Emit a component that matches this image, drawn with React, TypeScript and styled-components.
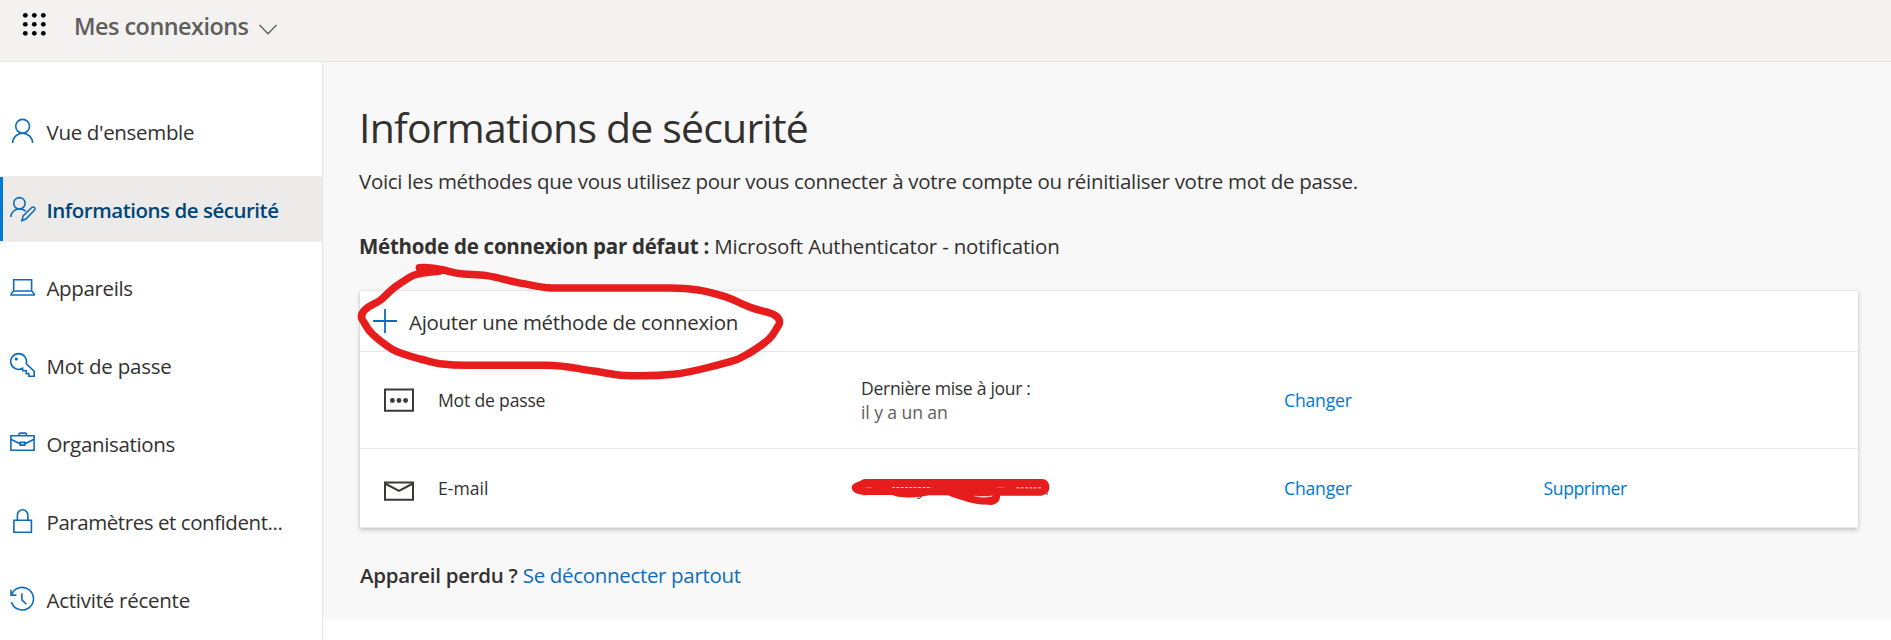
import React from 'react';
import styled, { createGlobalStyle } from 'styled-components';

const GlobalStyle = createGlobalStyle`
  * { box-sizing: border-box; }
  body {
    margin: 0;
    background: #fff;
    color: #323130;
    font-family: 'Open Sans', 'Noto Sans', sans-serif;
    font-size: 20.5px;
    overflow: hidden;
  }
`;

const Page = styled.div`
  display: flex;
  flex-direction: column;
  height: 640px;
  overflow: hidden;
`;

const Header = styled.header`
  display: flex;
  align-items: flex-start;
  flex: none;
  height: 62px;
  padding-left: 22px;
  background: #f3f2f0;
  border-bottom: 1px solid #e6e6e6;
`;

const WaffleIcon = styled.svg`
  width: 25px;
  height: 25px;
  margin-top: 12px;
  fill: #000;
`;

const HeaderTitle = styled.span`
  margin-left: 27px;
  font-size: 23.4px;
  font-weight: 600;
  line-height: 52px;
  letter-spacing: -0.5px;
  white-space: nowrap;
  color: #605e5c;
`;

const ChevronIcon = styled.svg`
  width: 20px;
  height: 12px;
  margin: 23px 0 0 9px;
  fill: none;
  stroke: #605e5c;
  stroke-width: 1.3;
`;

const Body = styled.div`
  display: flex;
  flex: 1;
  min-height: 0;
`;

const Sidebar = styled.nav`
  display: flex;
  flex-direction: column;
  gap: 12px;
  flex: none;
  width: 323px;
  padding-top: 36px;
  border-right: 1px solid #e5e5e5;
`;

const NavItem = styled.a<{ $active?: boolean }>`
  display: flex;
  align-items: center;
  gap: 10.5px;
  flex: none;
  position: relative;
  height: 66px;
  padding-left: 10px;
  border-radius: 2px;
  background: ${p => (p.$active ? '#ecebe9' : 'transparent')};
  color: ${p => (p.$active ? '#004578' : '#323130')};
  font-weight: ${p => (p.$active ? 600 : 400)};

  &::before {
    content: '';
    display: ${p => (p.$active ? 'block' : 'none')};
    position: absolute;
    left: 0;
    top: 1px;
    bottom: 1px;
    width: 3px;
    background: #0078d4;
  }
`;

const NavIcon = styled.svg`
  flex: none;
  width: 26px;
  height: 26px;
  fill: none;
  stroke: #0f6cbd;
  stroke-width: 1.6;
`;

const NavLabel = styled.span<{ $tracking: number }>`
  padding-top: 2px;
  line-height: 28px;
  letter-spacing: ${p => p.$tracking}px;
  white-space: nowrap;
`;

const Main = styled.main`
  flex: 1;
  height: 558px;
  padding: 37px 33px 0 36px;
  background: #f8f8f8;
`;

const Title = styled.h1`
  margin: 0;
  font-size: 41px;
  font-weight: 400;
  line-height: 56px;
  letter-spacing: -0.81px;
`;

const Intro = styled.p`
  margin: 12px 0 0;
  line-height: 28px;
  letter-spacing: -0.295px;
`;

const DefaultMethod = styled.p`
  margin: 37px 0 0;
  line-height: 28px;
  letter-spacing: -0.18px;
`;

const Bold = styled.strong<{ $weight: number; $tracking: number }>`
  font-weight: ${p => p.$weight};
  letter-spacing: ${p => p.$tracking}px;
`;

const Card = styled.section`
  position: relative;
  margin: 31px 0 0 1px;
  background: #fff;
  box-shadow: 0 2px 5px rgba(0, 0, 0, 0.2), 0 0 2px rgba(0, 0, 0, 0.1);
`;

const AddRow = styled.div`
  display: flex;
  align-items: center;
  gap: 11px;
  height: 61px;
  padding-left: 12px;
  border-bottom: 1px solid #e6e6e6;
`;

const AddLabel = styled.span`
  padding-top: 2px;
  line-height: 28px;
  letter-spacing: -0.3px;
`;

const MethodRow = styled.div<{ $height: number }>`
  display: grid;
  grid-template-columns: 78px 423px 423px 259.5px 1fr;
  align-items: center;
  height: ${p => p.$height}px;
  border-bottom: 1px solid #e6e6e6;
  font-size: 17.6px;
  line-height: 24px;
`;

const MethodIcon = styled.svg`
  width: 32px;
  height: 32px;
  margin-left: 23px;
  fill: none;
  stroke: #3b3a39;
  stroke-width: 2;
`;

const Cell = styled.span<{ $tracking?: number }>`
  letter-spacing: ${p => p.$tracking ?? 0}px;
  white-space: nowrap;
`;

const Muted = styled.div`
  color: #605e5c;
  letter-spacing: -0.1px;
`;

const RowLink = styled.a<{ $tracking: number }>`
  color: #0078d4;
  letter-spacing: ${p => p.$tracking}px;
`;

const LostDevice = styled.p`
  margin: 33px 0 0 1px;
  line-height: 28px;
`;

const SignOutLink = styled.a`
  color: #0f6cbd;
  letter-spacing: -0.33px;
`;

const CircleMark = styled.svg`
  position: absolute;
  left: -20px;
  top: -41px;
  width: 460px;
  height: 150px;
  pointer-events: none;
`;

const ScribbleMark = styled.svg`
  position: absolute;
  left: 488px;
  top: 183px;
  width: 210px;
  height: 36px;
  pointer-events: none;
`;

const navItems = [
  {
    label: "Vue d'ensemble",
    tracking: -0.33,
    icon: (
      <>
        <circle cx="12.6" cy="8.3" r="6.9" />
        <path d="M2.6 25a10 9.8 0 0 1 20 0" />
      </>
    ),
  },
  {
    label: 'Informations de sécurité',
    tracking: -0.48,
    active: true,
    icon: (
      <>
        <circle cx="9.4" cy="7.3" r="5.7" />
        <path d="M0.8 21C1 16.3 4.6 13 9.3 13c2.6 0 4.7.8 6.5 2.2" />
        <path d="M11.9 24.6l1.2-4.8 8.6-8.3a1.9 1.9 0 0 1 2.7 2.7l-8.5 8.9z" />
      </>
    ),
  },
  {
    label: 'Appareils',
    tracking: -0.36,
    icon: (
      <>
        <path d="M3.7 16.5V5.7h17.9v10.8" />
        <path d="M3.5 17h18.3l2.4 3v1H1.1v-1z" />
      </>
    ),
  },
  {
    label: 'Mot de passe',
    tracking: -0.23,
    icon: (
      <>
        <path d="M12.6 16.3A7.9 7.9 0 1 1 16.2 11.6l8 7.7v5h-5.3v-2.7h-2.7v-2.8h-3.4z" />
        <circle cx="6.3" cy="7" r="1.6" fill="#0f6cbd" stroke="none" />
      </>
    ),
  },
  {
    label: 'Organisations',
    tracking: -0.35,
    icon: (
      <>
        <path d="M0.9 5.7h23.2v14.5H0.9z" />
        <path d="M9 5.7V4.3q0-1.2 1.2-1.2h5.1q1.2 0 1.2 1.2v1.4" />
        <path d="M0.9 9.2l9.1 4.5M24.1 9.2L15 13.7M10.2 12.4h4.6v2.7h-4.6z" />
      </>
    ),
  },
  {
    label: 'Paramètres et confident...',
    tracking: -0.44,
    icon: (
      <>
        <path d="M3.9 12.3h17.5v12H3.9z" />
        <path d="M7.4 12.3V7.2a5.2 5.4 0 0 1 10.5 0v5.1" />
      </>
    ),
  },
  {
    label: 'Activité récente',
    tracking: -0.25,
    icon: (
      <>
        <path d="M1.6 8.8A11.3 11.3 0 1 1 1.4 16" />
        <path d="M1 3.8v5.3h5.4M11.9 7.2v6.6l4.5 4.5" />
      </>
    ),
  },
];

export default function App() {
  return (
    <Page>
      <GlobalStyle />
      <Header>
        <WaffleIcon viewBox="0 0 25 25">
          {[3.3, 12.3, 21.3].map(y =>
            [3.3, 12.3, 21.3].map(x => <circle key={`${x}-${y}`} cx={x} cy={y} r="2.4" />),
          )}
        </WaffleIcon>
        <HeaderTitle>Mes connexions</HeaderTitle>
        <ChevronIcon viewBox="0 0 20 12">
          <path d="M1.5 2l8.5 8.7L18.5 2" />
        </ChevronIcon>
      </Header>
      <Body>
        <Sidebar>
          {navItems.map(item => (
            <NavItem key={item.label} $active={item.active}>
              <NavIcon viewBox="0 0 26 26">{item.icon}</NavIcon>
              <NavLabel $tracking={item.tracking}>{item.label}</NavLabel>
            </NavItem>
          ))}
        </Sidebar>
        <Main>
          <Title>Informations de sécurité</Title>
          <Intro>
            Voici les méthodes que vous utilisez pour vous connecter à votre compte ou réinitialiser
            votre mot de passe.
          </Intro>
          <DefaultMethod>
            <Bold $weight={700} $tracking={-0.247}>
              Méthode de connexion par défaut :
            </Bold>{' '}
            Microsoft Authenticator - notification
          </DefaultMethod>
          <Card>
            <AddRow>
              <NavIcon viewBox="0 0 26 26">
                <path d="M1 13h24M13 1v24" strokeWidth="1.8" />
              </NavIcon>
              <AddLabel>Ajouter une méthode de connexion</AddLabel>
            </AddRow>
            <MethodRow $height={97}>
              <MethodIcon viewBox="0 0 32 32">
                <path d="M2 5.5h28v21.3H2z" />
                <g fill="#3b3a39" stroke="none">
                  <circle cx="9.4" cy="16.5" r="2.4" />
                  <circle cx="16" cy="16.5" r="2.4" />
                  <circle cx="22.6" cy="16.5" r="2.4" />
                </g>
              </MethodIcon>
              <Cell $tracking={-0.2}>Mot de passe</Cell>
              <Cell $tracking={-0.32}>
                Dernière mise à jour :<Muted>il y a un an</Muted>
              </Cell>
              <RowLink $tracking={-0.18}>Changer</RowLink>
            </MethodRow>
            <MethodRow $height={79}>
              <MethodIcon viewBox="0 0 32 32">
                <path d="M2 10.5h28v17.2H2z" />
                <path d="M2 11.5l14 7.3 14-7.3" />
              </MethodIcon>
              <Cell $tracking={0}>E-mail</Cell>
              <Cell />
              <RowLink $tracking={-0.18}>Changer</RowLink>
              <RowLink $tracking={-0.4}>Supprimer</RowLink>
            </MethodRow>
            <CircleMark viewBox="0 0 1380 450">
              <path
                d="M238 53C265 51 290 55 310 60C335 66 345 70 370 72C400 74 415 73 440 77C475 82 500 91 530 97C570 104 605 114 635 114H990C1025 114 1045 116 1080 121C1110 126 1130 132 1155 140C1185 150 1205 163 1240 175C1265 184 1285 186 1300 193C1320 203 1323 217 1313 230C1305 242 1300 255 1287 267C1260 291 1230 310 1195 327C1170 337 1140 343 1110 351C1075 360 1040 369 1000 373C950 378 885 378 845 376C815 373 790 367 760 363C715 357 675 346 620 346H380C350 346 325 344 300 341C275 338 265 333 240 327C210 319 180 311 155 297C130 280 110 265 95 250C80 236 75 220 67 209C62 200 64 190 75 179C90 165 105 162 122 150C140 134 148 124 165 111C185 96 195 91 212 80C235 67 265 68 300 63"
                fill="none"
                stroke="#e71d1d"
                strokeWidth="22.5"
                strokeLinecap="round"
                strokeLinejoin="round"
              />
            </CircleMark>
            <ScribbleMark viewBox="0 0 630 108">
              <path d="M45 62h12M208 74l8-2 5-6M597 56v7" stroke="#323130" strokeWidth="3" fill="none" />
              <path
                d="M11 41C12 29 26 25 37 21Q43 15 52 15H582C598 16 604 27 604 40C604 53 597 61 580 65H456C457 80 447 92 429 93C405 93 380 90 363 85C345 79 318 72 300 64H243C225 68 200 72 170 70C155 69 145 68 133 63H62C35 63 12 57 11 41Z"
                fill="#e71d1d"
              />
              <path d="M380 66q35 4 53-1v1q-15 5-38 3z" fill="#fff" stroke="#fff" strokeWidth="1" />
              <path d="M132 40.500h118M505 41.500h75" stroke="#fff" strokeWidth="2.500" strokeDasharray="9 4" />
              <path d="M52 41h20M447 40h20" stroke="#f6b0b0" strokeWidth="1.500" />
            </ScribbleMark>
          </Card>
          <LostDevice>
            <Bold $weight={600} $tracking={-0.3}>
              Appareil perdu ?
            </Bold>{' '}
            <SignOutLink>Se déconnecter partout</SignOutLink>
          </LostDevice>
        </Main>
      </Body>
    </Page>
  );
}
